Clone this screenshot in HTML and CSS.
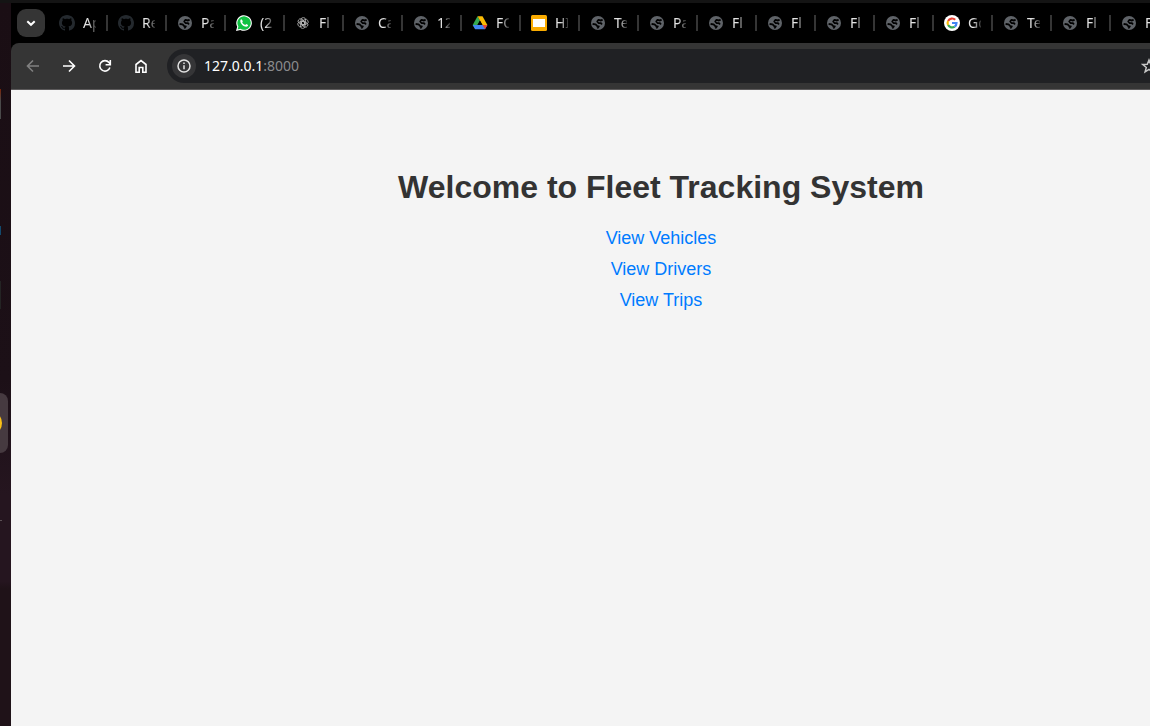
FILE: index.html
```html
<!DOCTYPE html>
<html lang="en">
<head>
<meta charset="utf-8">
<title>Fleet Tracking System</title>
<link rel="stylesheet" href="styles.css">
</head>
<body>
<svg class="sprite" aria-hidden="true">
  <symbol id="globe" viewBox="0 0 16 16">
    <circle cx="8" cy="8" r="7" fill="#5f6368"/>
    <path fill="none" stroke="#000" stroke-width="1.800" stroke-linejoin="round" d="M12.600 4.600 11 5.500 8.500 4.900 7.200 6.500 8.500 8l2.600.2.800 1.300M2.600 9l3 .400 1.700 1.800 1.500.300-1.500 1.800"/>
  </symbol>
  <symbol id="github" viewBox="0 0 16 16">
    <path fill="#24292e" d="M8 0C3.580 0 0 3.580 0 8c0 3.540 2.290 6.530 5.470 7.590.4.070.55-.17.55-.38 0-.19-.01-.82-.01-1.490-2.010.37-2.530-.49-2.690-.94-.09-.23-.48-.94-.82-1.130-.28-.15-.68-.52-.01-.53.63-.01 1.080.58 1.230.82.72 1.210 1.870.87 2.330.66.070-.52.28-.87.51-1.070-1.780-.2-3.640-.89-3.640-3.950 0-.87.31-1.590.82-2.150-.08-.2-.36-1.020.08-2.120 0 0 .67-.21 2.200.82.64-.18 1.320-.27 2-.27s1.360.09 2 .27c1.530-1.040 2.200-.82 2.200-.82.44 1.100.16 1.920.08 2.120.51.56.82 1.270.82 2.150 0 3.070-1.870 3.750-3.650 3.950.29.25.54.73.54 1.480 0 1.070-.01 1.930-.01 2.200 0 .21.15.46.55.38A8.010 8.010 0 0 0 16 8c0-4.420-3.580-8-8-8z"/>
  </symbol>
</svg>
<div class="desktop">
  <aside class="dock">
    <span class="edge edge-red"></span>
    <span class="edge edge-blue"></span>
    <span class="edge edge-gray"></span>
    <span class="dock-item"><span class="dock-icon"></span></span>
    <span class="dock-rule"></span>
  </aside>
  <div class="browser">
    <header class="tabstrip">
      <button class="tab-search" aria-label="Search tabs"><svg width="16" height="16" viewBox="0 0 16 16" fill="none" stroke="#fff" stroke-width="2"><path d="m4.300 6.200 3.700 3.600 3.700-3.600"/></svg></button>
      <nav class="tabs" aria-label="Open tabs">
        <button class="tab"><svg class="favicon"><use href="#github"/></svg><span class="label">Ap</span></button>
        <button class="tab"><svg class="favicon"><use href="#github"/></svg><span class="label">Re</span></button>
        <button class="tab"><svg class="favicon"><use href="#globe"/></svg><span class="label">Pa</span></button>
        <button class="tab"><svg class="favicon" viewBox="0 0 16 16"><path fill="#fff" d="M0 16l1.200-4.200A7.800 7.800 0 1 1 4.300 14.900z"/><path fill="#12c143" d="M1.600 14.400l.8-2.800A6.700 6.700 0 1 1 4.500 13.700z"/><path fill="#fff" d="M5.500 4.300c-.7.1-1.300.9-1.200 1.900.3 2.700 3.100 5.300 5.900 5.500 1 0 1.900-.8 1.900-1.700L10.200 9l-.9 1c-1.400-.5-2.500-1.500-3.100-2.800l.7-.9z"/></svg><span class="label">(2</span></button>
        <button class="tab"><svg class="favicon" viewBox="0 0 16 16" fill="none" stroke="#b8b8b8" stroke-width=".8"><rect x="6" y="2.600" width="4.600" height="7" rx="2.200"/><rect x="6" y="2.600" width="4.600" height="7" rx="2.200" transform="rotate(60 8 8)"/><rect x="6" y="2.600" width="4.600" height="7" rx="2.200" transform="rotate(120 8 8)"/><rect x="6" y="2.600" width="4.600" height="7" rx="2.200" transform="rotate(180 8 8)"/><rect x="6" y="2.600" width="4.600" height="7" rx="2.200" transform="rotate(240 8 8)"/><rect x="6" y="2.600" width="4.600" height="7" rx="2.200" transform="rotate(300 8 8)"/></svg><span class="label">Fl</span></button>
        <button class="tab"><svg class="favicon"><use href="#globe"/></svg><span class="label">Ca</span></button>
        <button class="tab"><svg class="favicon"><use href="#globe"/></svg><span class="label">12</span></button>
        <button class="tab"><svg class="favicon" viewBox="0 0 16 16"><path fill="#34a853" d="M5.500 1.200 8 5.600 3.200 14 .7 9.900z"/><path fill="#fbbc04" d="M5.500 1.200h5l4.900 8.700h-5z"/><path fill="#4285f4" d="M.7 10h14.700L13 14.300H3.200z"/><path fill="#ea4335" d="M10.500 10h4.900L13 14.300z"/><path fill="#000" d="M8 5.600 10.500 10h-5z"/></svg><span class="label">FO</span></button>
        <button class="tab"><svg class="favicon" viewBox="0 0 16 16"><rect width="16" height="16" rx="1.500" fill="#f9ab00"/><path fill="#fff" d="M2 4h12v8H2z"/></svg><span class="label">HI</span></button>
        <button class="tab"><svg class="favicon"><use href="#globe"/></svg><span class="label">Te</span></button>
        <button class="tab"><svg class="favicon"><use href="#globe"/></svg><span class="label">Pa</span></button>
        <button class="tab"><svg class="favicon"><use href="#globe"/></svg><span class="label">Fl</span></button>
        <button class="tab"><svg class="favicon"><use href="#globe"/></svg><span class="label">Fl</span></button>
        <button class="tab"><svg class="favicon"><use href="#globe"/></svg><span class="label">Fl</span></button>
        <button class="tab"><svg class="favicon"><use href="#globe"/></svg><span class="label">Fl</span></button>
        <button class="tab"><svg class="favicon" viewBox="0 0 16 16" fill="none" stroke-width="2.200"><circle cx="8" cy="8" r="8" fill="#fff"/><path stroke="#ea4335" d="M4.100 5.900a4.500 4.500 0 0 1 7.100-1.100"/><path stroke="#fbbc05" d="M4.100 5.900a4.500 4.500 0 0 0 0 4.200"/><path stroke="#34a853" d="M4.100 10.100a4.500 4.500 0 0 0 6.600 1.500"/><path stroke="#4285f4" d="M10.700 11.600A4.500 4.500 0 0 0 12.500 8H8"/></svg><span class="label">Go</span></button>
        <button class="tab"><svg class="favicon"><use href="#globe"/></svg><span class="label">Te</span></button>
        <button class="tab"><svg class="favicon"><use href="#globe"/></svg><span class="label">Fl</span></button>
        <button class="tab"><svg class="favicon"><use href="#globe"/></svg><span class="label">Fl</span></button>
      </nav>
    </header>
    <div class="toolbar">
      <div class="nav-buttons">
        <button class="nav-button back" aria-label="Back"><svg viewBox="0 0 16 16"><path d="M14 8H3M8 2.500 2.500 8 8 13.500"/></svg></button>
        <button class="nav-button" aria-label="Forward"><svg viewBox="0 0 16 16"><path d="M2 8h11M8 2.500 13.500 8 8 13.500"/></svg></button>
        <button class="nav-button" aria-label="Reload"><svg viewBox="0 0 16 16"><path d="M12.900 9.500A5.200 5.200 0 1 1 12 4.600L13.200 6M13.300 2v4.700H8.600"/></svg></button>
        <button class="nav-button" aria-label="Home"><svg viewBox="0 0 16 16"><path d="M3 6.500 8 2.600l5 3.900v7.700H9.800V9.500H6.200v4.700H3z"/></svg></button>
      </div>
      <div class="omnibox">
        <button class="site-info" aria-label="View site information"><svg width="16" height="16" viewBox="0 0 16 16" fill="none" stroke="#e3e3e3" stroke-width="1.500"><circle cx="8" cy="8" r="6"/><path d="M8 7.200v4M8 4.500v1.600"/></svg></button>
        <span class="url">127.0.0.1<span class="port">:8000</span></span>
        <button class="bookmark" aria-label="Bookmark this tab"><svg width="16" height="16" viewBox="0 0 16 16" fill="none" stroke="#c7c7c7" stroke-width="1.500"><path d="m8 2 1.700 4.200 4.500.3-3.500 2.900 1.200 4.400L8 11.400l-3.900 2.400 1.200-4.400-3.500-2.900 4.500-.3z"/></svg></button>
      </div>
    </div>
    <main class="page">
      <h1>Welcome to Fleet Tracking System</h1>
      <a href="#vehicles">View Vehicles</a>
      <a href="#drivers">View Drivers</a>
      <a href="#trips">View Trips</a>
    </main>
  </div>
</div>
</body>
</html>
```

FILE: styles.css
```css
* {
  box-sizing: border-box;
}

body {
  margin: 0;
  overflow: hidden;
  background: #000;
}

button {
  padding: 0;
  border: 0;
  background: none;
  color: inherit;
  font: inherit;
}

.sprite {
  position: absolute;
  width: 0;
  height: 0;
}

.desktop {
  display: flex;
  min-height: 100vh;
  border-top: 3px solid #141414;
}

/* Launcher, mostly beyond the left edge of the screen */
.dock {
  position: relative;
  flex: none;
  width: 11px;
  background: linear-gradient(#1a0e14, #1c1017 52%, #25151f 68%, #25151f 80%, #1f1218 81%);
}

.edge {
  position: absolute;
  left: 0;
  width: 1px;
}

.edge-red {
  top: 86px;
  height: 30px;
  background: linear-gradient(#7a2408, #4a4a4a 40%);
}

.edge-blue {
  top: 223px;
  height: 9px;
  background: #124a6e;
}

.edge-gray {
  top: 278px;
  height: 28px;
  background: #242424;
}

.dock-item {
  position: absolute;
  top: 390px;
  left: 0;
  width: 8px;
  height: 60px;
  overflow: hidden;
  border-radius: 0 8px 8px 0;
  background: #463a40;
}

.dock-icon {
  position: absolute;
  top: 18px;
  right: 6px;
  width: 24px;
  height: 24px;
  border-radius: 50%;
  background: #fbc116;
}

.dock-rule {
  position: absolute;
  top: 517px;
  left: 0;
  width: 2px;
  height: 1px;
  background: #5d5257;
}

.browser {
  display: flex;
  flex: 1;
  flex-direction: column;
  min-width: 0;
  overflow: hidden;
}

.tabstrip {
  display: flex;
  align-items: center;
  height: 40px;
  padding-left: 6px;
  overflow: hidden;
  color: #e3e3e3;
  font: 14px/18px "Noto Sans", sans-serif;
}

.tab-search {
  display: grid;
  flex: none;
  place-items: center;
  width: 28px;
  height: 28px;
  margin-right: 4px;
  border-radius: 9px;
  background: #353535;
}

.tabs {
  display: flex;
}

.tab {
  display: flex;
  flex: none;
  align-items: center;
  gap: 8px;
  width: 59px;
  height: 16px;
  padding-left: 10px;
  border-right: 2px solid #353535;
}

.favicon {
  flex: none;
  width: 16px;
  height: 16px;
}

.label {
  width: 13px;
  overflow: hidden;
  text-align: left;
  white-space: nowrap;
  mask-image: linear-gradient(90deg, #000 40%, rgba(0, 0, 0, 0.2));
}

.toolbar {
  display: flex;
  gap: 8px;
  height: 47px;
  padding: 6px 0 6px 4px;
  border-bottom: 1px solid #5c5a5b;
  border-radius: 8px 0 0;
  background: #353535;
}

.nav-buttons {
  display: flex;
}

.nav-button {
  display: grid;
  place-items: center;
  width: 36px;
  height: 34px;
}

.nav-button svg {
  width: 16px;
  height: 16px;
  fill: none;
  stroke: #fff;
  stroke-width: 1.6px;
}

.back svg {
  stroke: #808080;
}

.omnibox {
  display: flex;
  flex: 1;
  align-items: center;
  gap: 8px;
  height: 34px;
  padding-left: 5px;
  border-radius: 17px 0 0 17px;
  background: #202124;
}

.site-info {
  display: grid;
  place-items: center;
  width: 24px;
  height: 24px;
  border-radius: 50%;
  background: #353537;
}

.url {
  color: #fff;
  font: 14px/18px "Noto Sans", sans-serif;
}

.port {
  color: #8a8b8d;
}

.bookmark {
  width: 16px;
  height: 16px;
  margin: 0 -7px 0 auto;
}

.bookmark svg {
  display: block;
}

.page {
  display: flex;
  flex: 1;
  flex-direction: column;
  align-items: center;
  gap: 10px;
  padding: 79px 0 40px 161px;
  background: #f4f4f4;
  font: 18px/21px "Liberation Sans", Arial, sans-serif;
}

.page h1 {
  margin: 0 0 12px;
  color: #333;
  font-size: 32px;
  line-height: 37px;
}

.page a {
  color: #007bff;
  text-decoration: none;
}
```
